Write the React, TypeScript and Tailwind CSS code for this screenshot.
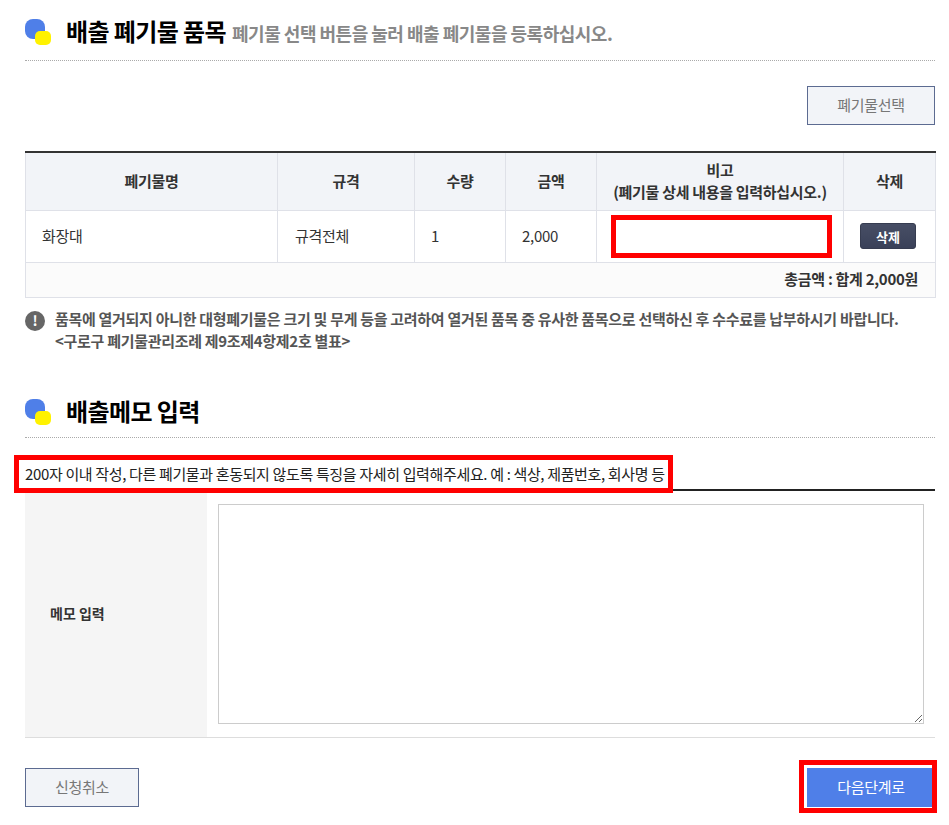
import React from 'react';

const SectionTitle = ({ title, sub, className }: { title: string; sub?: string; className: string }) => (
  <div className={`flex items-start border-b border-dotted border-[#aaaaaa] ${className}`}>
    <span className="relative w-[27px] h-[26px] mr-[14px] shrink-0">
      <span className="absolute left-0 top-0 w-[20px] h-[20px] rounded-[8px] bg-[#4f7fe8]" />
      <span className="absolute left-[10px] top-[12px] w-[16px] h-[14px] rounded-[5px] bg-[#fff200]" />
    </span>
    <h2 className="text-[24px] leading-[24px] font-bold text-black tracking-[-0.6px]">{title}</h2>
    {sub && <span className="ml-[6px] mt-[2px] text-[18px] leading-[24px] font-bold text-[#888888] tracking-[-0.5px]">{sub}</span>}
  </div>
);

const th = 'border-r border-[#dfe1e8] bg-[#f2f4f8] text-center font-bold text-[#333333] text-[15px] tracking-[-0.3px] leading-[22px]';
const td = 'border-r border-[#dfe1e8] px-[16px] text-[#333333] text-[15px] tracking-[-0.3px]';

export default function App() {
  return (
    <div className="w-[949px] h-[825px] overflow-hidden bg-white pl-[25px] pr-[14px] font-['Noto_Sans_CJK_KR','Noto_Sans',sans-serif]">
      <SectionTitle title="배출 폐기물 품목" sub="폐기물 선택 버튼을 눌러 배출 폐기물을 등록하십시오." className="h-[61px] pt-[19px]" />

      <div className="flex justify-end mt-[25px]">
        <button className="w-[128px] h-[39px] border border-[#5c6b91] bg-[#f2f4f8] text-[15px] tracking-[-0.3px] text-[#777777]">폐기물선택</button>
      </div>

      <table className="w-[910px] mt-[26px] table-fixed border-collapse border-t-2 border-[#333333] border-l border-l-[#dfe1e8]">
        <colgroup>
          <col className="w-[252px]" />
          <col className="w-[137px]" />
          <col className="w-[91px]" />
          <col className="w-[91px]" />
          <col className="w-[247px]" />
          <col className="w-[92px]" />
        </colgroup>
        <tbody>
          <tr className="h-[58px] border-b border-[#dfe1e8]">
            <th className={th}>폐기물명</th>
            <th className={th}>규격</th>
            <th className={th}>수량</th>
            <th className={th}>금액</th>
            <th className={th}>비고<br />(폐기물 상세 내용을 입력하십시오.)</th>
            <th className={th}>삭제</th>
          </tr>
          <tr className="h-[52px] border-b border-[#dfe1e8]">
            <td className={td}>화장대</td>
            <td className={`${td} pl-[17px]`}>규격전체</td>
            <td className={td}>1</td>
            <td className={td}>2,000</td>
            <td className="border-r border-[#dfe1e8] pl-[14px]">
              <input className="block w-[221px] h-[43px] border-[5px] border-[#ff0000] bg-white" />
            </td>
            <td className="border-r border-[#dfe1e8] pr-[3px] text-center">
              <button className="w-[56px] h-[26px] rounded-[3px] border border-[#363c50] bg-gradient-to-b from-[#474e65] to-[#3a4159] text-[13px] font-bold text-white">삭제</button>
            </td>
          </tr>
          <tr className="h-[35px] border-b border-[#dfe1e8] bg-[#fbfbfb]">
            <td colSpan={6} className="border-r border-[#dfe1e8] pr-[17px] text-right text-[15px] tracking-[-0.3px] font-bold text-[#333333]">총금액 : 합계 2,000원</td>
          </tr>
        </tbody>
      </table>

      <div className="flex mt-[10px]">
        <span className="flex items-center justify-center w-[20px] h-[20px] mt-[3px] rounded-full bg-[#666666] text-white text-[14px] font-bold shrink-0">!</span>
        <p className="ml-[10px] text-[15px] leading-[22px] font-bold text-[#555555] tracking-[-0.3px] whitespace-nowrap">
          품목에 열거되지 아니한 대형폐기물은 크기 및 무게 등을 고려하여 열거된 품목 중 유사한 품목으로 선택하신 후 수수료를 납부하시기 바랍니다.<br />
          &lt;구로구 폐기물관리조례 제9조제4항제2호 별표&gt;
        </p>
      </div>

      <SectionTitle title="배출메모 입력" className="mt-[47px] h-[39px]" />

      <p className="relative z-10 w-fit -ml-[11px] mt-[17px] -mb-[4px] border-[5px] border-[#ff0000] bg-white pl-[6px] pr-[3px] pt-[3px] h-[38px] text-[15px] leading-[22px] text-[#222222] tracking-[-0.35px] whitespace-nowrap">
        200자 이내 작성, 다른 폐기물과 혼동되지 않도록 특징을 자세히 입력해주세요. 예 : 색상, 제품번호, 회사명 등
      </p>

      <div className="flex h-[249px] border-t-2 border-[#222222] border-b border-b-[#dddddd]">
        <div className="flex items-center w-[182px] bg-[#f5f5f5] pl-[25px] text-[14px] font-bold text-[#333333]">메모 입력</div>
        <div className="flex-1 pl-[11px] pr-[11px] pt-[13px]">
          <textarea className="block w-full h-[220px] border border-[#cccccc] bg-white" />
        </div>
      </div>

      <div className="flex justify-between mt-[30px]">
        <button className="w-[114px] h-[39px] border border-[#5c6b91] bg-[#f2f4f8] text-[15px] tracking-[-0.3px] text-[#777777]">신청취소</button>
        <div className="relative">
          <button className="block w-[128px] h-[39px] bg-[#4f7fe8] text-[15px] tracking-[-0.3px] text-white">다음단계로</button>
          <span className="absolute -left-[8px] -top-[8px] -right-[2px] -bottom-[6px] border-[5px] border-[#ff0000]" />
        </div>
      </div>
    </div>
  );
}
